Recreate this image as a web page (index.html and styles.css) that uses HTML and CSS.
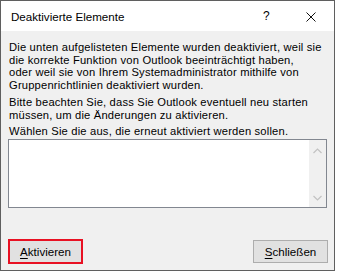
FILE: index.html
```html
<!DOCTYPE html>
<html lang="de">
<head>
<meta charset="utf-8">
<title>Deaktivierte Elemente</title>
<link rel="stylesheet" href="styles.css">
</head>
<body>
<div class="window">
  <div class="titlebar">
    <span class="title">Deaktivierte Elemente</span>
    <span class="help">?</span>
    <svg class="close" width="10" height="10" viewBox="0 0 10 10"><path d="M0.5 0.5 L9.5 9.5 M9.5 0.5 L0.5 9.5" stroke="#111" stroke-width="1" fill="none"/></svg>
  </div>
  <div class="content">
    <p class="para">Die unten aufgelisteten Elemente wurden deaktiviert, weil sie<br>die korrekte Funktion von Outlook beeinträchtigt haben,<br>oder weil sie von Ihrem Systemadministrator mithilfe von<br>Gruppenrichtlinien deaktiviert wurden.</p>
    <p class="para para2">Bitte beachten Sie, dass Sie Outlook eventuell neu starten<br>müssen, um die Änderungen zu aktivieren.</p>
    <p class="para para3">Wählen Sie die aus, die erneut aktiviert werden sollen.</p>
    <div class="listbox">
      <div class="list"></div>
      <div class="scrollbar">
        <svg width="9" height="6" viewBox="0 0 9 6"><path d="M0.5 5 L4.5 1 L8.5 5" stroke="#c2c2c2" stroke-width="1.2" fill="none"/></svg>
        <svg width="9" height="6" viewBox="0 0 9 6"><path d="M0.5 1 L4.5 5 L8.5 1" stroke="#c2c2c2" stroke-width="1.2" fill="none"/></svg>
      </div>
    </div>
    <div class="buttons">
      <div class="highlight"><button class="btn btn-inner"><u>A</u>ktivieren</button></div>
      <button class="btn"><u>S</u>chließen</button>
    </div>
  </div>
</div>
</body>
</html>
```
FILE: styles.css
```css
html, body {
  margin: 0;
  padding: 0;
  background: #ffffff;
}
body {
  width: 337px;
  height: 274px;
  font-family: "Liberation Sans", Arial, sans-serif;
  color: #000;
}
.window {
  width: 333px;
  height: 269px;
  border: 1px solid #5f5f5f;
  background: #f0f0f0;
  display: flex;
  flex-direction: column;
}
.titlebar {
  height: 30px;
  background: #ffffff;
  display: flex;
  align-items: center;
  padding: 0 0 0 10px;
  box-sizing: border-box;
}
.title {
  font-size: 11.6px;
  flex: 1;
}
.help {
  font-size: 12px;
  width: 7px;
  margin-right: 36px;
}
.close {
  display: block;
  margin: 2px 18px 0 0;
}
.content {
  flex: 1;
  padding: 10px 6px 0 7px;
  display: flex;
  flex-direction: column;
}
.para {
  margin: 0 0 5px 0;
  font-size: 11.2px;
  line-height: 12.5px;
  white-space: nowrap;
  letter-spacing: 0.18px;
  padding-left: 1px;
}
.para2 {
  margin-bottom: 4px;
}
.para3 {
  margin-bottom: 1.5px;
}
.listbox {
  width: 317px;
  height: 67px;
  border: 1px solid #828790;
  background: #fff;
  display: flex;
}
.list {
  flex: 1;
}
.scrollbar {
  width: 17px;
  background: #f0f0f0;
  display: flex;
  flex-direction: column;
  justify-content: space-between;
  align-items: center;
  padding: 8px 0 6px;
  box-sizing: border-box;
}
.scrollbar svg {
  display: block;
}
.buttons {
  margin-top: 31px;
  display: flex;
  justify-content: space-between;
  align-items: center;
}
.highlight {
  border: 2px solid #e81123;
  display: flex;
}
.btn {
  width: 75px;
  height: 23px;
  margin: 0;
  padding: 0;
  border: 1px solid #adadad;
  background: #e1e1e1;
  font-family: "Liberation Sans", Arial, sans-serif;
  font-size: 11.6px;
  color: #000;
}
.btn-inner {
  width: 71px;
  height: 21px;
  border: none;
}
.btn u {
  text-decoration-thickness: 1px;
  text-underline-offset: 2px;
}
```
